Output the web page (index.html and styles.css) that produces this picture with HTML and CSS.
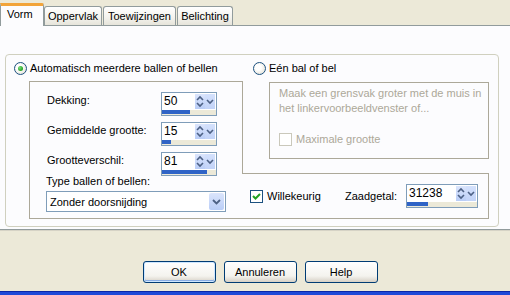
FILE: index.html
```html
<!DOCTYPE html>
<html lang="nl">
<head>
    <meta charset="UTF-8">
    <title>Vorm</title>
    <link rel="stylesheet" href="styles.css">
</head>
<body>

    <!-- Tabs -->
    <div class="tabs">
        <div class="tab tab-active">Vorm</div>
        <div class="tab tab-opp">Oppervlak</div>
        <div class="tab tab-toe">Toewijzingen</div>
        <div class="tab tab-bel">Belichting</div>
    </div>

    <div class="panel">
        <div class="group">
            <div class="top">
                <div class="col-left">
                    <label class="radio-row"><span class="radio checked"></span>Automatisch meerdere ballen of bellen</label>
                    <div class="box-left">
                        <div class="field-row">
                            <span class="field-label">Dekking:</span>
                            <div class="spin">
                                <div class="spin-main">
                                    <span class="spin-value">50</span>
                                    <span class="spin-btn"><svg width="10" height="15" viewBox="0 0 10 15"><polyline points="2,6 5,3 8,6" /><polyline points="2,9 5,12 8,9" /></svg></span>
                                    <span class="spin-drop"><svg width="10" height="15" viewBox="0 0 10 15"><polyline points="2,6 5,9 8,6" /></svg></span>
                                </div>
                                <div class="spin-bar"><div class="spin-fill" style="width: 52%"></div></div>
                            </div>
                        </div>
                        <div class="field-row">
                            <span class="field-label">Gemiddelde grootte:</span>
                            <div class="spin">
                                <div class="spin-main">
                                    <span class="spin-value">15</span>
                                    <span class="spin-btn"><svg width="10" height="15" viewBox="0 0 10 15"><polyline points="2,6 5,3 8,6" /><polyline points="2,9 5,12 8,9" /></svg></span>
                                    <span class="spin-drop"><svg width="10" height="15" viewBox="0 0 10 15"><polyline points="2,6 5,9 8,6" /></svg></span>
                                </div>
                                <div class="spin-bar"><div class="spin-fill" style="width: 17%"></div></div>
                            </div>
                        </div>
                        <div class="field-row">
                            <span class="field-label">Grootteverschil:</span>
                            <div class="spin">
                                <div class="spin-main">
                                    <span class="spin-value">81</span>
                                    <span class="spin-btn"><svg width="10" height="15" viewBox="0 0 10 15"><polyline points="2,6 5,3 8,6" /><polyline points="2,9 5,12 8,9" /></svg></span>
                                    <span class="spin-drop"><svg width="10" height="15" viewBox="0 0 10 15"><polyline points="2,6 5,9 8,6" /></svg></span>
                                </div>
                                <div class="spin-bar"><div class="spin-fill" style="width: 83%"></div></div>
                            </div>
                        </div>
                    </div>
                </div>
                <div class="col-right">
                    <label class="radio-row"><span class="radio"></span>Eén bal of bel</label>
                    <div class="box-right">
                        <p class="hint">Maak een grensvak groter met de muis in<br>het linkervoorbeeldvenster of...</p>
                        <label class="check-row disabled"><span class="check"></span>Maximale grootte</label>
                    </div>
                </div>
            </div>

            <div class="bottom">
                <div class="type-col">
                    <div class="type-label">Type ballen of bellen:</div>
                    <div class="select">
                        <span class="select-value">Zonder doorsnijding</span>
                        <span class="select-btn"><svg width="15" height="15" viewBox="0 0 15 15"><polyline points="4,6 7.5,9.5 11,6" /></svg></span>
                    </div>
                </div>
                <div class="seed-col">
                    <label class="check-row"><span class="check checked"><svg width="11" height="11" viewBox="0 0 11 11"><polyline points="2,5 4.5,7.5 9,3" /></svg></span>Willekeurig</label>
                    <span class="seed-label">Zaadgetal:</span>
                    <div class="spin spin-wide">
                        <div class="spin-main">
                            <span class="spin-value">31238</span>
                            <span class="spin-btn"><svg width="10" height="15" viewBox="0 0 10 15"><polyline points="2,6 5,3 8,6" /><polyline points="2,9 5,12 8,9" /></svg></span>
                            <span class="spin-drop"><svg width="10" height="15" viewBox="0 0 10 15"><polyline points="2,6 5,9 8,6" /></svg></span>
                        </div>
                        <div class="spin-bar"><div class="spin-fill" style="width: 30%"></div></div>
                    </div>
                </div>
            </div>
        </div>
    </div>

    <div class="buttons">
        <button class="btn btn-default">OK</button>
        <button class="btn">Annuleren</button>
        <button class="btn">Help</button>
    </div>

    <div class="taskbar"></div>

</body>
</html>
```

FILE: styles.css
```css
body { margin: 0; width: 510px; height: 295px; overflow: hidden; background: #ece9d8; font-family: "Liberation Sans", Arial, sans-serif; font-size: 11px; color: #000; }

/* tabs */
.tabs { display: flex; align-items: flex-end; height: 25px; }
.tab { box-sizing: border-box; height: 19px; line-height: 18px; text-align: center; border: 1px solid #919b9c; border-bottom: none; border-radius: 3px 3px 0 0; background: linear-gradient(#ffffff, #f3f2ec 60%, #e6e4da); margin-right: 1px; }
.tab-active { width: 44px; height: 23px; margin-bottom: -1px; position: relative; z-index: 1; border-top: 3px solid #f2a43a; border-radius: 0 2px 0 0; background: #fcfcfe; text-align: left; padding-left: 6px; line-height: 17px; margin-right: 0; }
.tab-opp { width: 58px; }
.tab-toe { width: 73px; }
.tab-bel { width: 56px; }

.panel { box-sizing: border-box; height: 205px; background: #fcfcfe; border-top: 1px solid #919b9c; border-bottom: 1px solid #919b9c; box-shadow: 0 1px 0 #d6d3c6; padding-top: 28px; }

.group { box-sizing: border-box; margin-left: 5px; width: 494px; height: 173px; border: 1px solid #d0d0bf; border-radius: 4px; }
.top { display: flex; padding-left: 8px; }
.col-left { width: 239px; }
.col-right { flex: 1; }

.radio-row { display: flex; align-items: center; height: 13px; line-height: 13px; margin-top: 7px; }
.radio { box-sizing: border-box; width: 13px; height: 13px; border: 1px solid #1c5180; border-radius: 50%; background: radial-gradient(circle at 40% 40%, #ffffff 30%, #dcd9cb); margin-right: 3px; display: flex; align-items: center; justify-content: center; }
.radio.checked::after { content: ""; width: 5px; height: 5px; border-radius: 50%; background: radial-gradient(circle at 35% 35%, #7be07b, #21a121 70%); }

.box-left { box-sizing: border-box; margin: 6px 0 0 15px; width: 214px; height: 92px; border: 1px solid #aca899; border-bottom: none; padding: 10px 0 0 17px; display: flex; flex-direction: column; gap: 6px; }
.field-row { display: flex; align-items: flex-start; height: 24px; }
.field-label { width: 114px; line-height: 16px; }

.box-right { box-sizing: border-box; margin: 7px 0 0 16px; width: 220px; height: 77px; border: 1px solid #aca899; padding: 3px 0 0 9px; }
.hint { margin: 0; line-height: 15px; color: #aca899; }

.check-row { display: flex; align-items: center; height: 13px; line-height: 13px; }
.check { box-sizing: border-box; width: 13px; height: 13px; border: 1px solid #1c5180; background: linear-gradient(135deg, #dcdcd7, #ffffff); margin-right: 4px; display: flex; align-items: center; justify-content: center; }
.check svg polyline { fill: none; stroke: #21a121; stroke-width: 2; }
.check.checked { background: #ffffff; }
.disabled { color: #aca899; margin-top: 17px; }
.disabled .check { border-color: #cac8bb; background: #ffffff; }

/* spinner */
.spin { box-sizing: border-box; width: 56px; height: 24px; border: 1px solid #7f9db9; background: #ffffff; display: flex; flex-direction: column; }
.spin-wide { width: 72px; }
.spin-main { display: flex; height: 16px; padding-top: 1px; }
.spin-value { flex: 1; font-size: 12px; line-height: 15px; padding-left: 2px; }
.spin-btn, .spin-drop { width: 10px; height: 15px; background: linear-gradient(#dbe5fc, #b9cdf7); }
.spin-drop { margin: 0 1px 0 0; background: linear-gradient(#d4e1fc, #c2d3f8); }
.spin svg polyline { fill: none; stroke: #4d6185; stroke-width: 1.6; }
.spin-bar { height: 5px; margin-top: 1px; background: #ece9d8; }
.spin-fill { height: 4px; background: #2f63c6; }

/* bottom row */
.bottom { box-sizing: border-box; display: flex; margin-left: 23px; width: 460px; height: 46px; border: 1px solid #aca899; border-top: none; }
.type-col { width: 212px; }
.type-label { line-height: 14px; margin: 1px 0 0 16px; }
.select { box-sizing: border-box; display: flex; align-items: center; margin: 3px 0 0 16px; width: 180px; height: 21px; border: 1px solid #7f9db9; background: #ffffff; }
.select-value { flex: 1; padding-left: 3px; }
.select-btn { width: 15px; height: 17px; margin-right: 1px; border-radius: 2px; background: linear-gradient(#dbe5fc, #b9cdf7); display: flex; align-items: center; }
.select-btn polyline { fill: none; stroke: #4d6185; stroke-width: 1.8; }
.seed-col { flex: 1; display: flex; align-items: center; border-top: 1px solid #aca899; padding: 0 10px 0 8px; }
.seed-col .check { border-color: #1c5180; }
.seed-label { margin-left: auto; margin-right: 9px; }

/* dialog buttons */
.buttons { display: flex; gap: 8px; justify-content: center; padding-left: 10px; margin-top: 31px; }
.btn { box-sizing: border-box; width: 73px; height: 22px; border: 1px solid #003c74; border-radius: 3px; background: linear-gradient(#ffffff, #f4f3ee 70%, #d6d0c5); font-family: "Liberation Sans", Arial, sans-serif; font-size: 11px; color: #000; padding: 0; }
.btn-default { box-shadow: inset 0 0 0 1px #cee7ff, inset 0 -1px 0 1px #89ade4; }

.taskbar { margin-top: 8px; height: 4px; border-top: 1px solid #0b27a8; background: #1f49d8; }
```
